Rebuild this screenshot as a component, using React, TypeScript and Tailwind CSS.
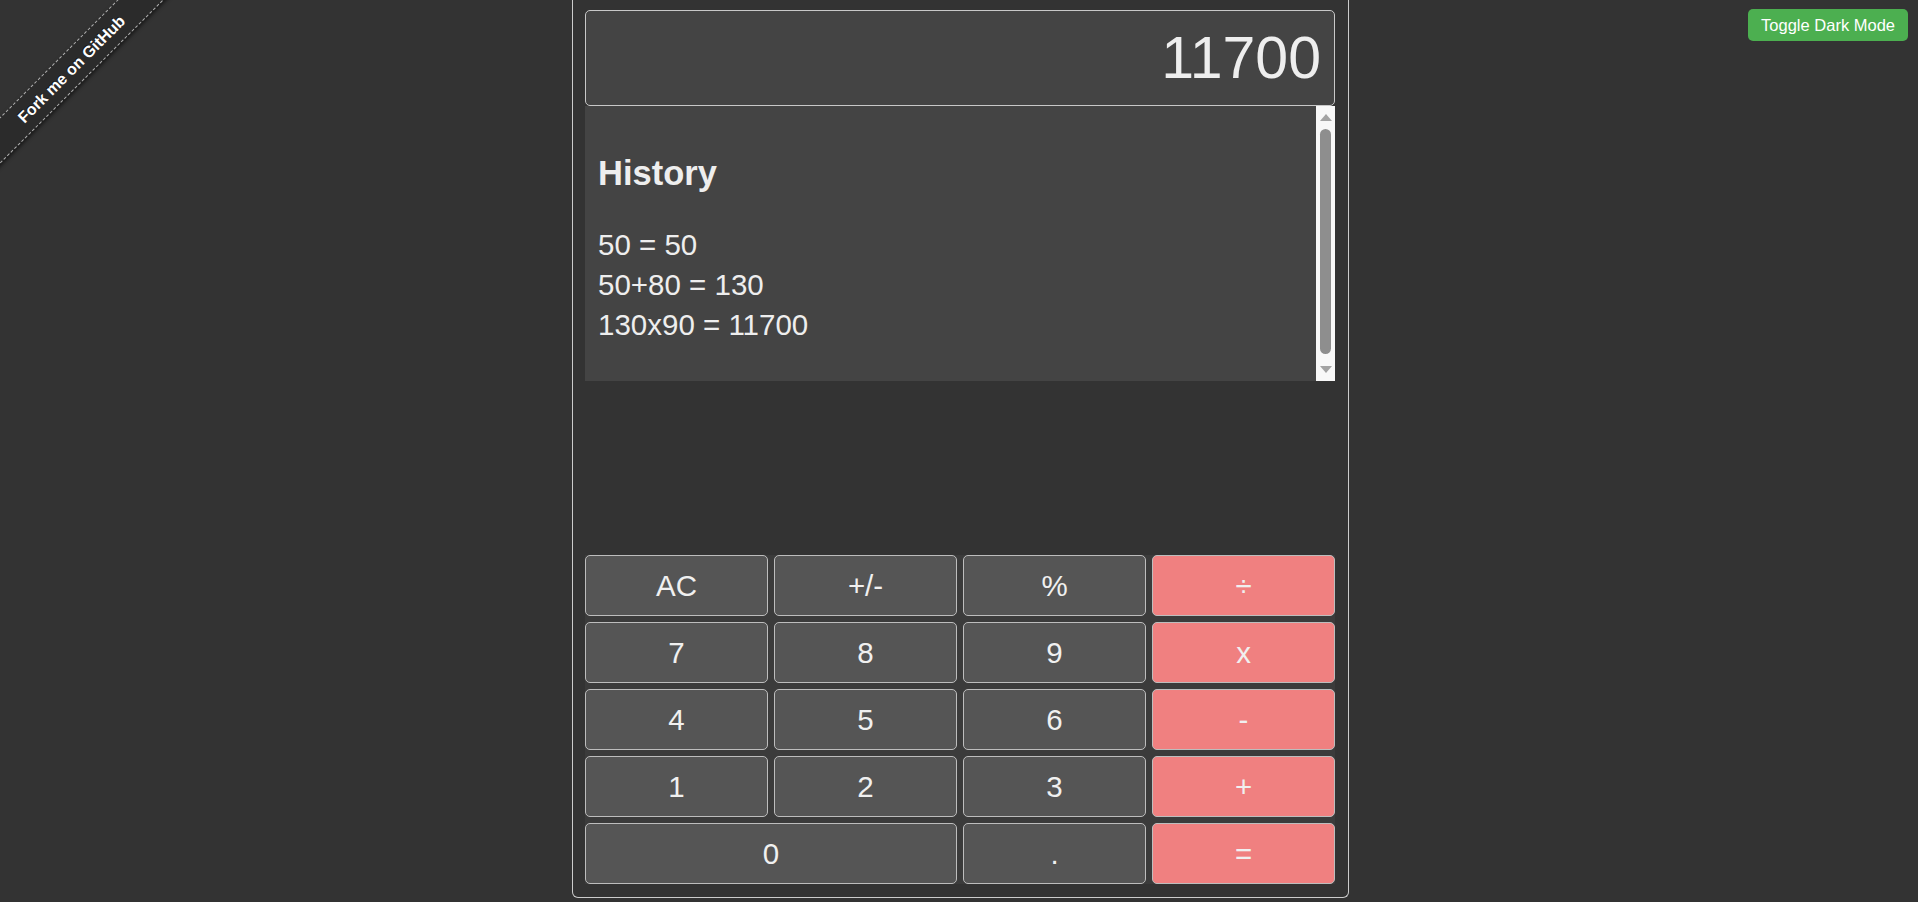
import React from "react";

const font = { fontFamily: '"Liberation Sans", Arial, sans-serif' };

type Key = { label: string; op?: boolean; wide?: boolean };

const keys: Key[] = [
  { label: "AC" },
  { label: "+/-" },
  { label: "%" },
  { label: "÷", op: true },
  { label: "7" },
  { label: "8" },
  { label: "9" },
  { label: "x", op: true },
  { label: "4" },
  { label: "5" },
  { label: "6" },
  { label: "-", op: true },
  { label: "1" },
  { label: "2" },
  { label: "3" },
  { label: "+", op: true },
  { label: "0", wide: true },
  { label: "." },
  { label: "=", op: true },
];

const history = ["50 = 50", "50+80 = 130", "130x90 = 11700"];

export default function App() {
  return (
    <div
      className="relative flex h-[902px] w-full justify-center overflow-hidden bg-[#333333] pl-[3px] text-[#eeeeee]"
      style={font}
    >
      {/* Fork ribbon */}
      <div className="pointer-events-none absolute left-0 top-0 h-[220px] w-[220px] overflow-hidden">
        <div className="absolute left-[-79.6px] top-[54px] flex h-[33px] w-[300px] -rotate-45 items-center justify-center border-y border-dashed border-[#b0b0b0] bg-[#2b2b2b] shadow-[0_2px_4px_rgba(0,0,0,0.55)]">
          <span className="ml-[4px] text-[16px] font-bold leading-none text-white [text-shadow:0_-1px_rgba(0,0,0,0.5)]">
            Fork me on GitHub
          </span>
        </div>
      </div>

      {/* Toggle */}
      <button className="absolute right-[10px] top-[9px] flex h-[32px] items-center rounded-[5px] bg-[#4caf50] px-[13px] text-[16.5px] text-white">
        Toggle Dark Mode
      </button>

      {/* Calculator */}
      <div className="flex h-[898px] w-[777px] flex-col rounded-b-[6px] border border-t-0 border-[#cccccc] pb-[13px] pl-[12px] pr-[13px] pt-[10px]">
        <div className="flex h-[96px] items-center justify-end rounded-[5px] border border-[#c8c8c8] bg-[#444444] pr-[13px] text-[59px] leading-none text-[#eeeeee]">
          11700
        </div>

        <div className="flex h-[275px] bg-[#444444]">
          <div className="flex-1 overflow-hidden pl-[13px] pr-[12px] pt-[12px]">
            <h3 className="mt-[36px] text-[34.5px] font-bold leading-[1.15] text-[#eeeeee]">
              History
            </h3>
            <div className="mt-[31px] text-[29.5px] leading-[40px] text-[#eeeeee]">
              {history.map((h) => (
                <div key={h}>{h}</div>
              ))}
            </div>
          </div>
          <div className="flex w-[19px] flex-col items-center bg-[#f8f8f8]">
            <div className="mt-[8px] h-0 w-0 border-x-[6px] border-b-[7px] border-x-transparent border-b-[#a3a3a3]" />
            <div className="mt-[8px] h-[225px] w-[11px] rounded-full bg-[#8e8e8e]" />
            <div className="mt-[12px] h-0 w-0 border-x-[6px] border-t-[7px] border-x-transparent border-t-[#a3a3a3]" />
          </div>
        </div>

        <div className="mt-auto grid grid-cols-4 gap-[6px] bg-[#3b3b3b]">
          {keys.map((k) => (
            <button
              key={k.label}
              className={
                "flex h-[61px] items-center justify-center rounded-[5px] border border-[#bdbdbd] text-[29.5px] leading-none text-[#f0f0f0] " +
                (k.op ? "bg-[#f08080] " : "bg-[#555555] ") +
                (k.wide ? "col-span-2" : "")
              }
            >
              {k.label}
            </button>
          ))}
        </div>
      </div>
    </div>
  );
}
